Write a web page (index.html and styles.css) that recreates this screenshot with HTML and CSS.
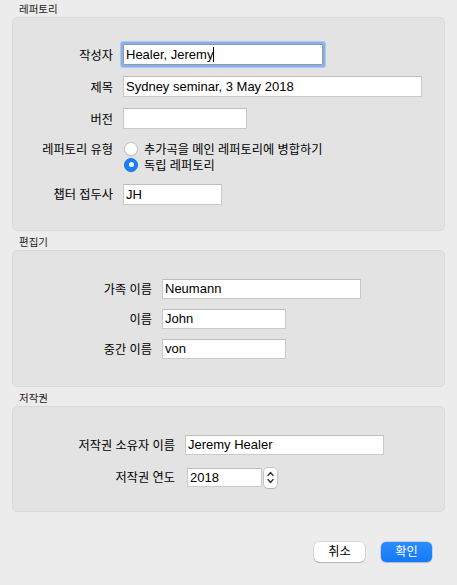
FILE: index.html
```html
<!DOCTYPE html>
<html lang="ko">
<head>
  <meta charset="UTF-8">
  <title>레퍼토리 속성</title>
  <link rel="stylesheet" href="styles.css">
</head>
<body>
  <div class="sheet">
    <!-- 레퍼토리 -->
    <div class="group-title first">레퍼토리</div>
    <div class="box box1">
      <div class="label">작성자</div>
      <div class="field w200 focused">Healer, Jeremy<span class="caret"></span></div>

      <div class="label">제목</div>
      <div class="field w299">Sydney seminar, 3 May 2018</div>

      <div class="label">버전</div>
      <div class="field w124"></div>

      <div class="label radio-label">레퍼토리 유형</div>
      <div class="radios">
        <div class="radio-row"><span class="radio"></span>추가곡을 메인 레퍼토리에 병합하기</div>
        <div class="radio-row"><span class="radio on"></span>독립 레퍼토리</div>
      </div>

      <div class="label">챕터 접두사</div>
      <div class="field w99">JH</div>
    </div>

    <!-- 편집기 -->
    <div class="group-title">편집기</div>
    <div class="box box2">
      <div class="label">가족 이름</div>
      <div class="field h20 w199">Neumann</div>

      <div class="label">이름</div>
      <div class="field h20 w124">John</div>

      <div class="label">중간 이름</div>
      <div class="field h20 w124">von</div>
    </div>

    <!-- 저작권 -->
    <div class="group-title">저작권</div>
    <div class="box box3">
      <div class="label">저작권 소유자 이름</div>
      <div class="field h20 w199">Jeremy Healer</div>

      <div class="label">저작권 연도</div>
      <div class="stepper-wrap">
        <div class="field h19 w75">2018</div>
        <div class="stepper">
          <svg width="13" height="19" viewBox="0 0 13 19">
            <path d="M4 7.5 L6.5 4.5 L9 7.5" fill="none" stroke="#333" stroke-width="1.3" stroke-linecap="round" stroke-linejoin="round"/>
            <path d="M4 11.5 L6.5 14.5 L9 11.5" fill="none" stroke="#333" stroke-width="1.3" stroke-linecap="round" stroke-linejoin="round"/>
          </svg>
        </div>
      </div>
    </div>

    <div class="buttons">
      <div class="btn">취소</div>
      <div class="btn primary">확인</div>
    </div>
  </div>
</body>
</html>
```

FILE: styles.css
```css
*{
  margin: 0;
  padding: 0;
  box-sizing: border-box;
}
body{
  background: #ececec;
  font-family: "Liberation Sans", "Noto Sans CJK KR", sans-serif;
  font-size: 13px;
  color: #000;
}
.sheet{
  width: 457px;
  height: 585px;
  padding: 0 12px;
}

/* 그룹 제목 */
.group-title{
  font-size: 10.5px;
  line-height: 13px;
  height: 19px;
  padding: 5px 0 0 7px;
  color: #1a1a1a;
}
.group-title.first{
  height: 17px;
  padding-top: 3px;
}

.box{
  display: grid;
  align-items: center;
  column-gap: 10px;
  background: #e3e3e3;
  border: 1px solid #dadada;
  border-radius: 5px;
}
.box1{
  grid-template-columns: 100px auto;
  row-gap: 11px;
  padding: 26px 0 25px;
  height: 214px;
}
.box2{
  grid-template-columns: 139px auto;
  row-gap: 10px;
  padding: 28px 0 27px;
  height: 137px;
}
.box3{
  grid-template-columns: 162px auto;
  row-gap: 12px;
  padding: 28px 0 24px;
  height: 106px;
}

.label{
  font-size: 12.2px;
  text-align: right;
  white-space: nowrap;
}
.radio-label{
  align-self: start;
  line-height: 16px;
  padding-top: 1px;
}

/* 텍스트 필드 */
.field{
  height: 21px;
  line-height: 19px;
  padding-left: 2px;
  background: #fff;
  border: 1px solid #c9c9c9;
  border-top-color: #bdbdbd;
  white-space: nowrap;
  overflow: hidden;
}
.field.h20{
  height: 20px;
  line-height: 18px;
}
.field.h19{
  height: 19px;
  line-height: 18px;
}
.focused{
  border-color: #9a9a9a;
  box-shadow: 0 0 0 2px #86b1ef, 0 0 0 3px #a9c8f3;
  border-radius: 1px;
  overflow: visible;
}
.caret{
  display: inline-block;
  width: 1px;
  height: 15px;
  background: #000;
  vertical-align: -3px;
}
.w200{ width: 200px; }
.w199{ width: 199px; }
.w299{ width: 299px; }
.w124{ width: 124px; }
.w99{ width: 99px; }
.w75{ width: 75px; }

/* 라디오 */
.radios{
  padding: 0 0 0 1px;
}
.radio-row{
  display: flex;
  align-items: center;
  height: 16px;
  gap: 6px;
  font-size: 12.2px;
}
.radio{
  width: 14px;
  height: 14px;
  border-radius: 50%;
  background: #fff;
  border: 1px solid #c2c2c2;
  box-shadow: 0 0.5px 1px rgba(0,0,0,0.1);
}
.radio.on{
  background: #1a7ff6;
  border-color: #1a74e8;
  position: relative;
}
.radio.on:after{
  content: '';
  position: absolute;
  left: 3.5px;
  top: 3.5px;
  width: 5px;
  height: 5px;
  border-radius: 50%;
  background: #fff;
}

/* 스테퍼 */
.stepper-wrap{
  display: flex;
  align-items: center;
  gap: 2px;
  padding-left: 2px;
}
.stepper{
  width: 13px;
  height: 20px;
  background: #fff;
  border-radius: 4px;
  box-shadow: 0 0 0 0.5px rgba(0,0,0,0.25), 0 1px 1px rgba(0,0,0,0.1);
  margin-bottom: -1px;
}
.stepper svg{
  display: block;
}

/* 버튼 */
.buttons{
  display: flex;
  justify-content: flex-end;
  gap: 16px;
  padding-right: 13px;
  margin-top: 30px;
}
.btn{
  width: 51px;
  height: 20px;
  line-height: 20px;
  font-size: 12.2px;
  text-align: center;
  background: #fff;
  border-radius: 5px;
  box-shadow: 0 0 0 0.5px rgba(0,0,0,0.18), 0 1px 1px rgba(0,0,0,0.15);
}
.btn.primary{
  color: #fff;
  background: linear-gradient(#2d8cfb, #1279f6);
  box-shadow: 0 0 0 0.5px rgba(0,80,200,0.3), 0 1px 1px rgba(0,0,0,0.12);
}
```
